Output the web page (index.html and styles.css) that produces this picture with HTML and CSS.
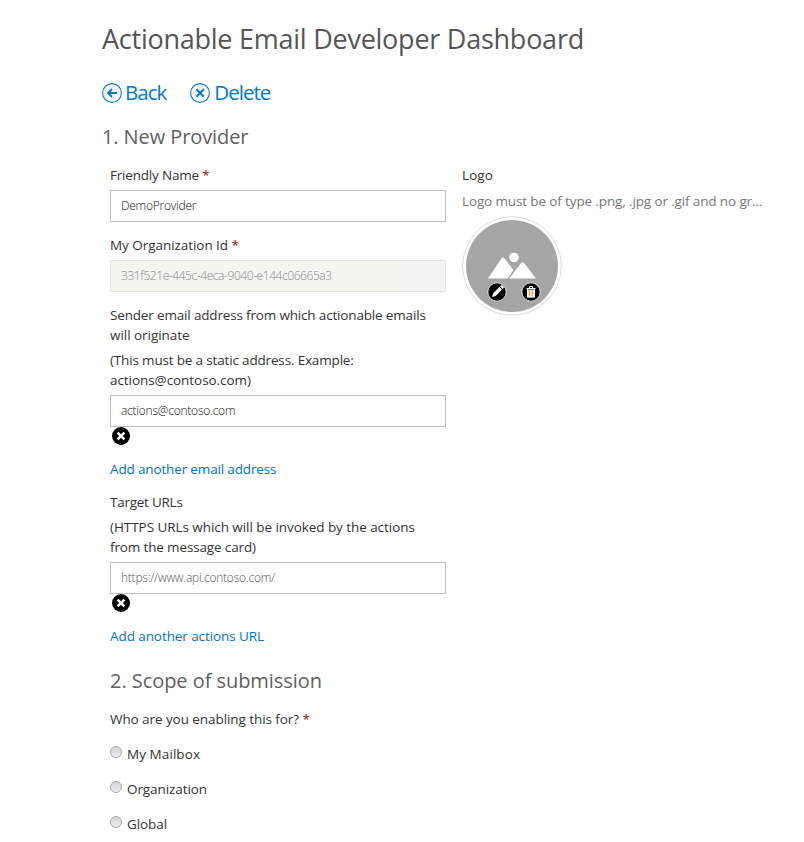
FILE: index.html
```html
<!DOCTYPE html>
<html lang="en">
<head>
<meta charset="utf-8">
<title>Actionable Email Developer Dashboard</title>
<link rel="stylesheet" href="styles.css">
</head>
<body>
<main class="page">
  <h1 class="title">Actionable Email Developer Dashboard</h1>
  <nav class="actions">
    <a class="action back"><svg width="20" height="20" viewBox="0 0 20 20" fill="none" stroke="currentColor"><circle cx="10" cy="10" r="9.4" stroke-width="1.1"/><path d="M15 10H6.5M10 6L6 10l4 4" stroke-width="1.9"/></svg><span>Back</span></a>
    <a class="action"><svg width="20" height="20" viewBox="0 0 20 20" fill="none" stroke="currentColor"><circle cx="10" cy="10" r="9.4" stroke-width="1.1"/><path d="M6.4 6.2l7.4 7.6M13.8 6.2l-7.4 7.6" stroke-width="2"/></svg><span>Delete</span></a>
  </nav>
  <h2 class="section provider">1. New Provider</h2>
  <div class="columns">
    <div class="fields">
      <p class="label t-name">Friendly Name <b>*</b></p>
      <div class="input">DemoProvider</div>
      <p class="label gap t-org">My Organization Id <b>*</b></p>
      <div class="input disabled">331f521e-445c-4eca-9040-e144c06665a3</div>
      <p class="label gap">Sender email address from which actionable emails<br><span class="t-origin">will originate</span></p>
      <p class="label">(This must be a static address. Example:<br><span class="t-sample">actions@contoso.com)</span></p>
      <div class="input">actions@contoso.com</div>
      <svg class="remove" width="18" height="18" viewBox="0 0 18 18"><circle cx="9" cy="9" r="9"/><path d="M5.6 5.6l6.8 6.8M12.4 5.6l-6.8 6.8" stroke="#fff" stroke-width="2.6"/></svg>
      <a class="link">Add another email address</a>
      <p class="label gap t-target">Target URLs</p>
      <p class="label t-https">(HTTPS URLs which will be invoked by the actions<br><span class="t-card">from the message card)</span></p>
      <div class="input hint">https://www.api.contoso.com/</div>
      <svg class="remove" width="18" height="18" viewBox="0 0 18 18"><circle cx="9" cy="9" r="9"/><path d="M5.6 5.6l6.8 6.8M12.4 5.6l-6.8 6.8" stroke="#fff" stroke-width="2.6"/></svg>
      <a class="link t-url">Add another actions URL</a>
    </div>
    <div class="logo">
      <p class="label t-logo">Logo</p>
      <p class="note">Logo must be of type .png, .jpg or .gif and no gr...</p>
      <svg class="avatar" width="100" height="100" viewBox="0 0 100 100">
        <circle cx="50" cy="50" r="49.3" fill="#fff" stroke="#dcdcdc"/>
        <circle cx="50" cy="50" r="46" fill="#a5a5a5"/>
        <g fill="#fff"><circle cx="52" cy="41.5" r="4.8"/><path d="M26 62.6L39.4 42.5q1.6-2 3.2 0L51.5 54 45.6 62.6zM47.2 62.6L59 47.2q1.7-1.7 3.3 0L74 62.6z"/></g>
        <circle cx="35" cy="76" r="9.2" stroke="#fff" stroke-width=".8"/>
        <path d="M30 81l1.1-3.7 6.3-6.3 2.6 2.6-6.3 6.3zM38.1 70.3l1-.9q.8-.6 1.5 0l1 1q.6.7 0 1.5l-.9 1z" fill="#fff"/>
        <circle cx="69" cy="76" r="9.2" stroke="#fff" stroke-width=".8"/>
        <path d="M65.3 73.5h7.4v7.7h-7.4z" fill="#fde4c4"/>
        <path d="M64.5 72.5h9M67.4 72v-1.4h3.2V72M65.5 73v8h7v-8" fill="none" stroke="#fff"/>
        <path d="M67.7 74.5v5.5M70.3 74.5v5.5" stroke="#c99a62" stroke-width=".8"/>
      </svg>
    </div>
  </div>
  <section class="scope">
    <h2 class="section">2. Scope of submission</h2>
    <p class="label t-who">Who are you enabling this for? <b>*</b></p>
    <label class="option t-mail"><i class="radio"></i><span>My Mailbox</span></label>
    <label class="option"><i class="radio"></i><span>Organization</span></label>
    <label class="option"><i class="radio"></i><span>Global</span></label>
  </section>
</main>
</body>
</html>
```
FILE: styles.css
```css
* { box-sizing: border-box; }
body { margin: 0; background: #fff; color: #333; font: 13.5px/20px "Open Sans", "Noto Sans", sans-serif; }
h1, h2, p { margin: 0; font-weight: 400; }
.page { padding: 20px 0 0 102px; }
.title { font-size: 27px; line-height: 38px; color: #555; white-space: nowrap; letter-spacing: -.25px; }
.actions { display: flex; margin-top: 21px; height: 28px; gap: 24px; color: #0078d7; }
.action { display: flex; align-items: center; gap: 4px; font-size: 20.5px; letter-spacing: -.95px; white-space: nowrap; }
.action span { margin-top: -2px; }
.back { gap: 3px; letter-spacing: -1px; }
.section { font-size: 20px; line-height: 28px; color: #5f5f5f; white-space: nowrap; letter-spacing: -.05px; }
.provider { margin-top: 16px; letter-spacing: -.09px; }
.columns { display: flex; gap: 16px; padding-left: 8px; margin-top: 14px; }
.fields { width: 336px; display: flex; flex-direction: column; }
.label { white-space: nowrap; margin-bottom: 5px; letter-spacing: -.165px; }
.gap { margin-top: 13px; }
.label b { font-weight: 400; color: #a80000; }
.input { height: 32px; border: 1px solid #c0c0c0; padding: 0 10px; font-size: 12px; line-height: 30px; font-weight: 300; color: #111; letter-spacing: -.24px; white-space: nowrap; }
.disabled { background: linear-gradient(90deg, #f5f5f0 286px, #f3f3f3 286px); border-color: #e1e1e1; color: #888; letter-spacing: -.43px; }
.hint { color: #555; }
.remove { margin: 0 0 14px 2px; }
.link { color: #0072c6; white-space: nowrap; letter-spacing: -.15px; }
.logo { width: 310px; }
.note { color: #777; white-space: nowrap; margin-top: 6px; letter-spacing: -.13px; }
.avatar { display: block; margin-top: 5px; }
.scope { padding-left: 8px; margin-top: 21px; }
.scope .label { margin-top: 14px; }
.option { display: flex; align-items: center; height: 20px; margin-top: 15px; gap: 5px; letter-spacing: -.08px; }
.radio { width: 12px; height: 12px; border-radius: 50%; border: 1px solid #aaa; background: linear-gradient(#d4d4d4, #eee); margin-top: -4px; }

/* Tracking of individual labels */
.t-name { letter-spacing: -.19px; }
.t-org { letter-spacing: -.05px; }
.t-https { letter-spacing: -.06px; }
.t-origin { letter-spacing: -.04px; }
.t-sample { letter-spacing: -.06px; }
.t-url { letter-spacing: -.08px; }
.t-target { letter-spacing: -.25px; }
.t-card { letter-spacing: -.14px; }
.t-logo { letter-spacing: .08px; }
.t-who { letter-spacing: -.07px; }
.t-mail { letter-spacing: .07px; }
```
